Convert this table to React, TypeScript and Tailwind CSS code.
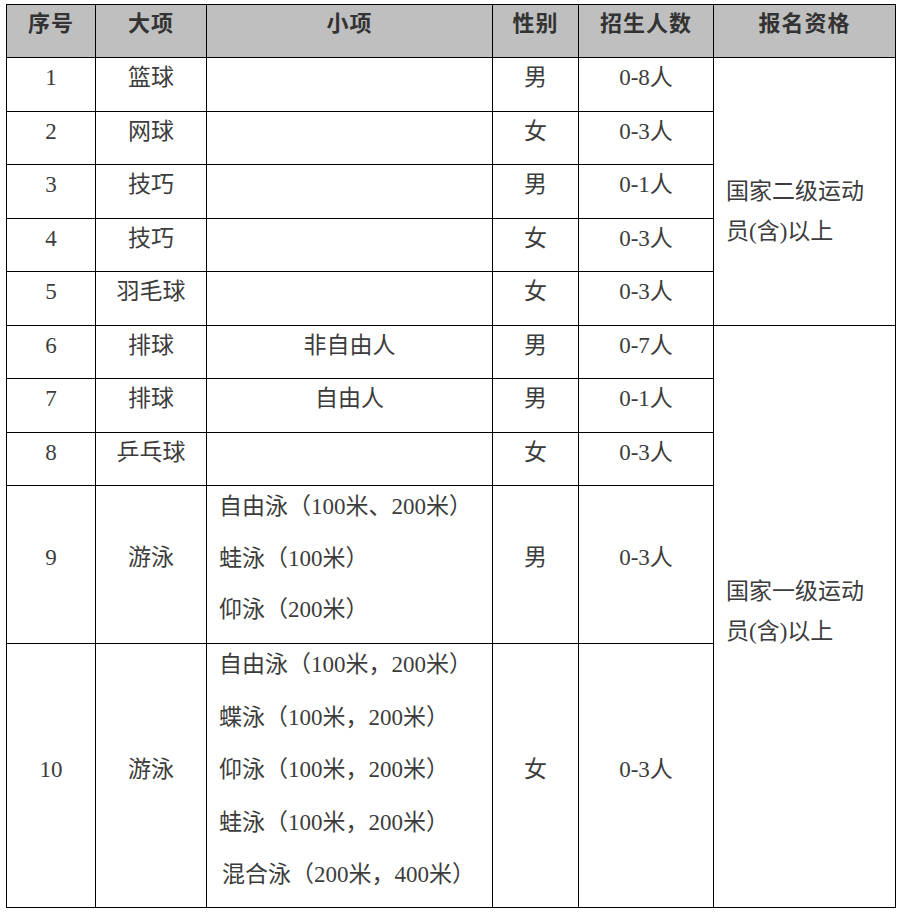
import React from 'react';

type Row = {
  no: string;
  big: string;
  small?: string[];
  smallCenter?: boolean;
  sex: string;
  count: string;
};

const ROWS: Row[] = [
  { no: '1', big: '篮球', sex: '男', count: '0-8人' },
  { no: '2', big: '网球', sex: '女', count: '0-3人' },
  { no: '3', big: '技巧', sex: '男', count: '0-1人' },
  { no: '4', big: '技巧', sex: '女', count: '0-3人' },
  { no: '5', big: '羽毛球', sex: '女', count: '0-3人' },
  { no: '6', big: '排球', small: ['非自由人'], smallCenter: true, sex: '男', count: '0-7人' },
  { no: '7', big: '排球', small: ['自由人'], smallCenter: true, sex: '男', count: '0-1人' },
  { no: '8', big: '乒乓球', sex: '女', count: '0-3人' },
];

const cell = 'border border-black align-top p-0';

export default function App() {
  return (
    <div className="min-h-screen bg-white pl-[6px] pt-[4px] text-[23px] text-[#3c3c3c] font-['Liberation_Serif','Noto_Sans_CJK_SC',serif]">
      <table className="border-collapse table-fixed w-[889px]">
        <colgroup>
          <col className="w-[89px]" />
          <col className="w-[111px]" />
          <col className="w-[286px]" />
          <col className="w-[86px]" />
          <col className="w-[135px]" />
          <col className="w-[182px]" />
        </colgroup>
        <thead>
          <tr className="h-[53px] bg-[#bfbfbf] font-bold text-[#333] text-[22px]">
            {['序号', '大项', '小项', '性别', '招生人数', '报名资格'].map((h) => (
              <th key={h} className={`${cell} text-center pt-[7px] leading-[24px] tracking-[1px]`}>
                {h}
              </th>
            ))}
          </tr>
        </thead>
        <tbody>
          {ROWS.map((r, i) => (
            <tr key={r.no} className="h-[53.5px]">
              <td className={`${cell} text-center pt-[8px] leading-[24px]`}>{r.no}</td>
              <td className={`${cell} text-center pt-[8px] leading-[24px]`}>{r.big}</td>
              <td className={`${cell} pt-[8px] leading-[24px] ${r.smallCenter ? 'text-center' : 'pl-[12px]'}`}>
                {r.small?.[0]}
              </td>
              <td className={`${cell} text-center pt-[8px] leading-[24px]`}>{r.sex}</td>
              <td className={`${cell} text-center pt-[8px] leading-[24px]`}>{r.count}</td>
              {i === 0 && (
                <td rowSpan={5} className={`${cell} pl-[12px] pt-[114px] leading-[40px]`}>
                  国家二级运动<br />员(含)以上
                </td>
              )}
              {i === 5 && (
                <td rowSpan={5} className={`${cell} pl-[12px] pt-[246px] leading-[40px]`}>
                  国家一级运动<br />员(含)以上
                </td>
              )}
            </tr>
          ))}
          <tr className="h-[158px]">
            <td className={`${cell} text-center pt-[60px] leading-[24px]`}>9</td>
            <td className={`${cell} text-center pt-[60px] leading-[24px]`}>游泳</td>
            <td className={`${cell} pl-[12px] pt-[9px]`}>
              <div className="h-[51.5px] leading-[24px]">自由泳（100米、200米）</div>
              <div className="h-[51.5px] leading-[24px]">蛙泳（100米）</div>
              <div className="h-[30px] leading-[24px]">仰泳（200米）</div>
            </td>
            <td className={`${cell} text-center pt-[60px] leading-[24px]`}>男</td>
            <td className={`${cell} text-center pt-[60px] leading-[24px]`}>0-3人</td>
          </tr>
          <tr className="h-[264px]">
            <td className={`${cell} text-center pt-[114px] leading-[24px]`}>10</td>
            <td className={`${cell} text-center pt-[114px] leading-[24px]`}>游泳</td>
            <td className={`${cell} pl-[12px] pt-[9px]`}>
              <div className="h-[52.5px] leading-[24px]">自由泳（100米，200米）</div>
              <div className="h-[52.5px] leading-[24px]">蝶泳（100米，200米）</div>
              <div className="h-[52.5px] leading-[24px]">仰泳（100米，200米）</div>
              <div className="h-[52.5px] leading-[24px]">蛙泳（100米，200米）</div>
              <div className="h-[30px] pl-[3px] leading-[24px]">混合泳（200米，400米）</div>
            </td>
            <td className={`${cell} text-center pt-[114px] leading-[24px]`}>女</td>
            <td className={`${cell} text-center pt-[114px] leading-[24px]`}>0-3人</td>
          </tr>
        </tbody>
      </table>
    </div>
  );
}
